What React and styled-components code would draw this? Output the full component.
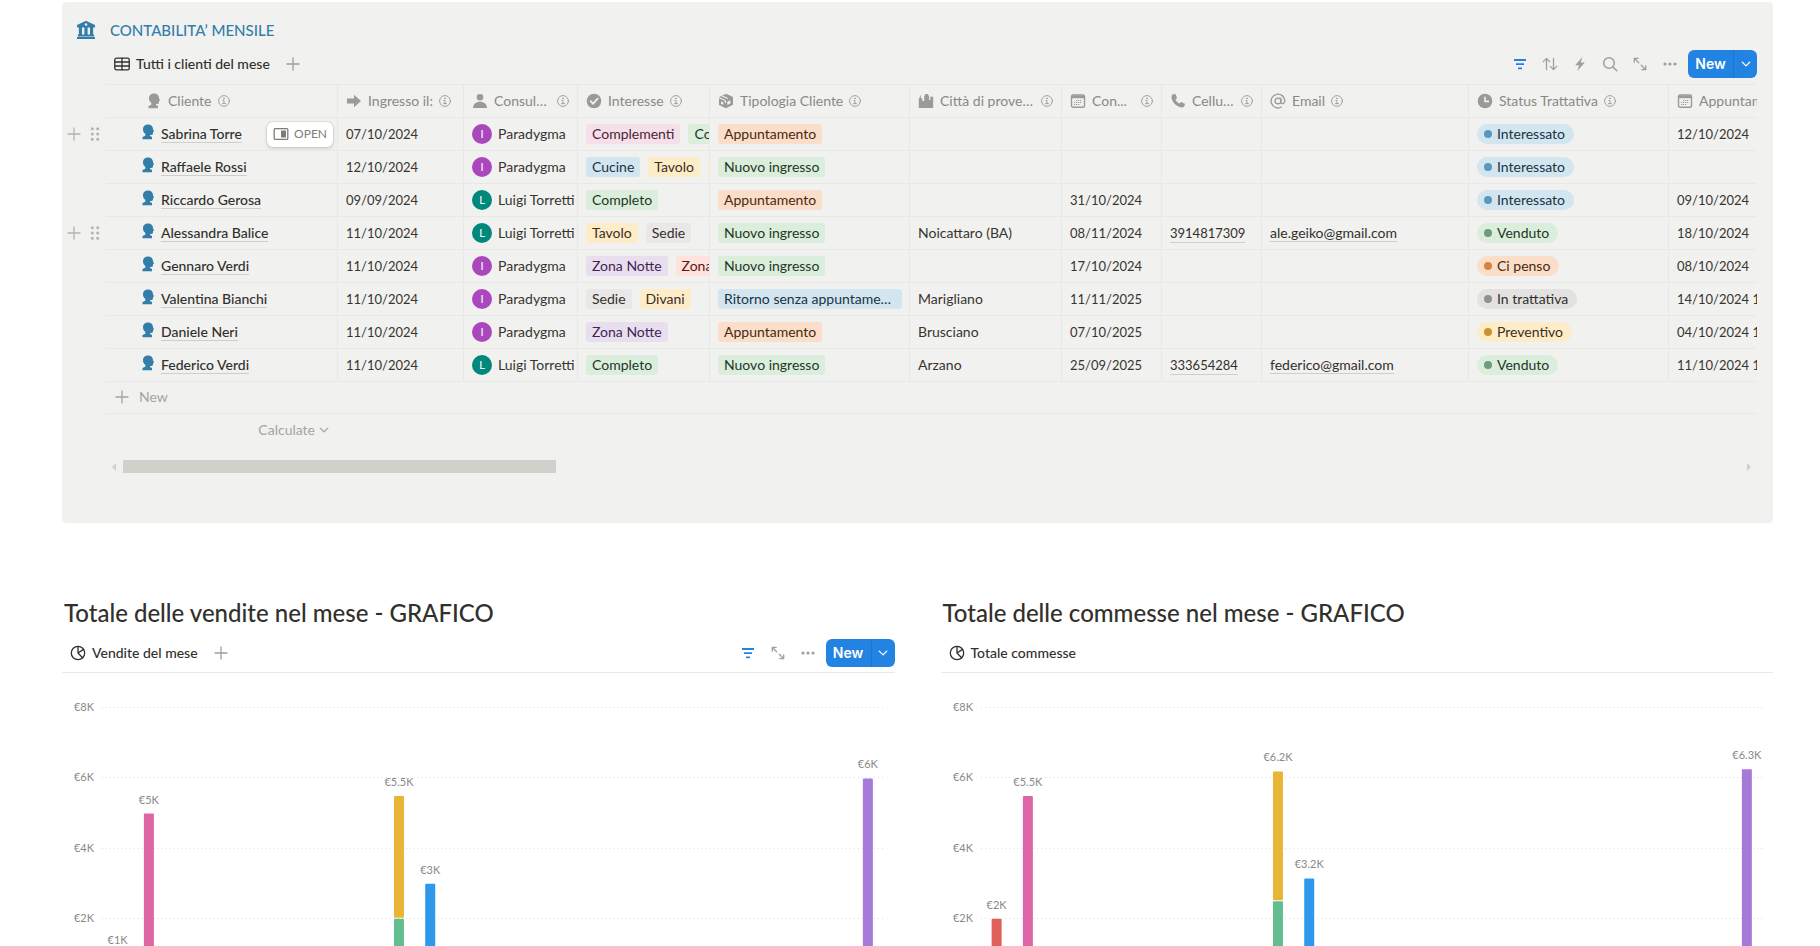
import React from 'react';
import styled, { createGlobalStyle } from 'styled-components';

const GlobalStyle = createGlobalStyle`
  * {
    box-sizing: border-box;
  }

  body {
    margin: 0;
    background: #fff;
    color: #37352f;
    font-family: Lato, "Open Sans", sans-serif;
    font-size: 14px;
    line-height: 20px;
  }

  button {
    font: inherit;
    border: 0;
    padding: 0;
    background: none;
    cursor: pointer;
  }

  svg {
    display: block;
    flex: none;
  }
`;

const Page = styled.main`
  height: 100vh;
  overflow: hidden;
  padding: 2px 47px 0 62px;
`;

const Panel = styled.section`
  padding-bottom: 50px;
  border-radius: 4px;
  background: #f1f1ef;
`;

const PanelTitle = styled.h2`
  display: flex;
  align-items: center;
  gap: 14px;
  margin: 0;
  padding: 18px 14px 0;
  color: #337ea9;
  font-size: 15px;
  font-weight: 500;
`;

const Toolbar = styled.div`
  display: flex;
  align-items: center;
  justify-content: space-between;
  height: 44px;
  padding: ${(props) => (props.$inset ? '4px 16px 0 52px' : '4px 0 0 8px')};
  border-bottom: ${(props) => (props.$inset ? '0' : '1px solid #e9e9e8')};
`;

const Group = styled.div`
  display: flex;
  align-items: center;
`;

const Tab = styled.button`
  display: flex;
  align-items: center;
  gap: 6px;
  color: #32302c;
  font-weight: 500;
`;

const IconButton = styled.button`
  display: flex;
  align-items: center;
  justify-content: center;
  width: 30px;
  height: 28px;
  color: ${(props) => (props.$active ? '#2383e2' : '#a09f9b')};
`;

const AddView = styled(IconButton)`
  margin-left: 8px;
`;

const NewButton = styled.div`
  display: flex;
  height: 28px;
  margin-left: 3px;
  border-radius: 6px;
  overflow: hidden;
  background: #2383e2;
  color: #fff;
`;

const NewMain = styled.button`
  width: 45px;
  color: #fff;
  font-family: Inter, sans-serif;
  font-weight: 600;
`;

const NewMore = styled.button`
  display: flex;
  align-items: center;
  justify-content: center;
  width: 24px;
  border-left: 1px solid #1f74c9;
  color: #fff;
`;

const TableWrap = styled.div`
  overflow: hidden;
  margin-right: 16px;
`;

const Grid = styled.table`
  table-layout: fixed;
  width: 1807px;
  border-collapse: separate;
  border-spacing: 0;
`;

const HeadCell = styled.th`
  height: 34px;
  padding: 0 8px;
  padding-left: ${(props) => (props.$first ? '40px' : '8px')};
  border: solid #e8e8e6;
  border-width: ${(props) => (props.$first ? '1px 0 1px' : '1px 0 1px 1px')};
  font-weight: 400;
  text-align: left;
`;

const HeadInner = styled.div`
  display: flex;
  align-items: center;
  gap: 6px;
  color: #9b9a97;
`;

const HeadLabel = styled.span`
  overflow: hidden;
  color: #8a8985;
  text-overflow: ellipsis;
  white-space: nowrap;
`;

const InfoSlot = styled.span`
  margin-left: ${(props) => (props.$push ? 'auto' : '0')};
`;

const Cell = styled.td`
  height: 33px;
  padding: 0 0 0 8px;
  border: solid #e8e8e6;
  border-width: 0 0 1px 1px;
  overflow: hidden;
  white-space: nowrap;
`;

const NameCell = styled(Cell)`
  padding: 0 4px 0 34px;
  border-left-width: 0;
`;

const HandleCell = styled.td`
  padding: 0 0 2px 4px;
`;

const Handles = styled.div`
  display: flex;
  align-items: center;
  gap: 5px;

  button {
    color: #b4b3af;
  }
`;

const Inline = styled.div`
  display: flex;
  align-items: center;
  gap: ${(props) => props.$gap}px;
`;

const NameIcon = styled.span`
  color: #337ea9;
  padding-bottom: 4px;
`;

const NameLink = styled.a`
  border-bottom: 1px solid #cfcecb;
  color: #32302c;
  font-weight: 500;
  line-height: 17px;
  text-decoration: none;
`;

const Contact = styled.a`
  display: inline-block;
  border-bottom: 1px solid #cfcecb;
  color: #32302c;
  font-size: ${(props) => (props.$digits ? '13px' : '14px')};
  line-height: 17px;
  text-decoration: none;
`;

const DateText = styled.span`
  font-size: 13px;
`;

const OpenButton = styled.button`
  display: flex;
  align-items: center;
  gap: 5px;
  height: 25px;
  margin-left: auto;
  padding: 0 6px;
  border-radius: 6px;
  background: #fff;
  box-shadow: 0 0 0 1px rgba(84, 72, 49, 0.1), 0 2px 4px rgba(0, 0, 0, 0.12);
  color: #7d7c78;
  font-size: 12px;
`;

const Avatar = styled.span`
  display: flex;
  align-items: center;
  justify-content: center;
  width: 20px;
  height: 20px;
  border-radius: 50%;
  background: ${(props) => props.$color};
  color: #fff;
  font-size: 11px;
`;

const Tag = styled.span`
  flex: none;
  max-width: 184px;
  padding: 0 6px;
  border-radius: 3px;
  overflow: hidden;
  background: ${(props) => props.$tone[0]};
  color: ${(props) => props.$tone[1]};
  text-overflow: ellipsis;
`;

const Status = styled.span`
  display: flex;
  align-items: center;
  gap: 5px;
  padding: 0 9px 0 7px;
  border-radius: 10px;
  background: ${(props) => props.$tone[0]};
  color: ${(props) => props.$tone[1]};

  &::before {
    content: "";
    width: 8px;
    height: 8px;
    border-radius: 50%;
    background: ${(props) => props.$tone[2]};
  }
`;

const TableFoot = styled.div`
  margin: 0 16px 0 44px;
`;

const NewRow = styled.button`
  display: flex;
  align-items: center;
  gap: 9px;
  width: 100%;
  height: 32px;
  padding: 0 0 2px 8px;
  border-bottom: 1px solid #e8e8e6;
  color: #a5a4a0;
`;

const Calculate = styled.button`
  display: flex;
  align-items: center;
  justify-content: flex-end;
  gap: 3px;
  width: 231px;
  height: 32px;
  padding-right: 7px;
  color: #a5a4a0;
`;

const ScrollBar = styled.div`
  display: flex;
  align-items: center;
  height: 13px;
  margin-top: 14px;
  padding: 0 6px;
  color: #d1d0cb;
`;

const Thumb = styled.div`
  width: 433px;
  height: 13px;
  margin: 0 auto 0 7px;
  background: #d1d0cb;
`;

const Columns = styled.div`
  display: grid;
  grid-template-columns: 1fr 1fr;
  gap: 46px;
  padding-top: 73px;
`;

const ChartTitle = styled.h2`
  margin: 0;
  padding: 1px 2px 0;
  color: #32302c;
  font-size: 24px;
  font-weight: 500;
  line-height: 32px;
`;

const Plot = styled.svg`
  width: calc(100% - 51px);
  height: 320px;
  margin: 24px 11px 0 40px;
  overflow: visible;

  text {
    fill: #8a8985;
    font-size: 11px;
  }
`;

const Svg = ({ size = 16, children, ...rest }) => (
  <svg width={size} height={size} viewBox="0 0 16 16" fill="currentColor" aria-hidden="true" {...rest}>
    {children}
  </svg>
);

const stroke = {
  fill: 'none', stroke: 'currentColor', strokeWidth: 1.3, strokeLinecap: 'round', strokeLinejoin: 'round',
};

const BankIcon = () => (
  <Svg size={20}>
    <path d="M8 .6 15.2 4v1.9H.8V4zM2.3 5.9h2.5v5.9H2.3zm4.4 0h2.6v5.9H6.7zm4.5 0h2.5v5.9h-2.5zM1.5 11.5h13v1.6h-13zM.8 13.5h14.4v1.7H.8z" />
    <circle cx="8" cy="3.5" r="1" fill="#f1f1ef" />
  </Svg>
);
const TableIcon = () => (
  <Svg {...stroke}>
    <rect x=".8" y="2.2" width="14.4" height="11.6" rx="1.6" />
    <path d="M.8 6h14.4M.8 10h14.4M8 2.2v11.6" />
  </Svg>
);
const PieIcon = () => (
  <Svg {...stroke}>
    <circle cx="8" cy="8" r="6.7" />
    <path d="M8 1.3V8l5.6-3.6M8 8l4.6 4.8" />
  </Svg>
);
const PlusIcon = () => (
  <Svg {...stroke}><path d="M8 2v12M2 8h12" /></Svg>
);
const FilterIcon = () => (
  <Svg fill="none" stroke="currentColor" strokeWidth="1.8"><path d="M2 4h12M4 8.2h8M6 12.4h4" /></Svg>
);
const SortIcon = () => (
  <Svg {...stroke}><path d="M4.5 13.5v-11M1.3 5.6l3.2-3.2 3.2 3.2M11.5 2.5v11M8.3 10.4l3.2 3.2 3.2-3.2" /></Svg>
);
const BoltIcon = () => (
  <Svg><path d="M10.4 1 3.2 9.2h3.9L5.3 15l7.5-8.4H8.7z" /></Svg>
);
const SearchIcon = () => (
  <Svg {...stroke} strokeWidth={1.5}>
    <circle cx="7" cy="7" r="5.3" />
    <path d="m11 11 3.8 3.8" />
  </Svg>
);
const ExpandIcon = () => (
  <Svg {...stroke}><path d="M2.3 6.2V2.3h3.9M2.5 2.5l4.2 4.2M13.7 9.8v3.9H9.8M13.5 13.5 9.3 9.3" /></Svg>
);
const DotsIcon = () => (
  <Svg>
    <circle cx="3" cy="8" r="1.6" />
    <circle cx="8" cy="8" r="1.6" />
    <circle cx="13" cy="8" r="1.6" />
  </Svg>
);
const ChevronIcon = () => (
  <Svg size={12} {...stroke} strokeWidth={1.8}><path d="m3 5.5 5 5 5-5" /></Svg>
);
const GripIcon = () => (
  <Svg>
    {[2.7, 8, 13.3].map((y) => (
      <React.Fragment key={y}>
        <circle cx="5.3" cy={y} r="1.5" />
        <circle cx="10.7" cy={y} r="1.5" />
      </React.Fragment>
    ))}
  </Svg>
);
const HeadIcon = () => (
  <Svg>
    <path d="M8 .6c3 0 5 1.9 5 4.6l1.1 2.4-1.1.5v1.2c0 1-.6 1.600-1.600 1.600H10v1l2 1.200v2.200H2.500v-2.200l2.800-1.300V9.700C3.800 8.600 3 7.200 3 5.400 3 2.600 5.100.6 8 .6z" />
  </Svg>
);
const ArrowIcon = () => (
  <Svg><path d="M1 5.600h7V1.700L15 8l-7 6.300v-3.900H1z" /></Svg>
);
const PersonIcon = () => (
  <Svg>
    <circle cx="8" cy="4.2" r="3.3" />
    <path d="M1 15c.1-4 3-6.300 7-6.300s6.900 2.300 7 6.300z" />
  </Svg>
);
const CheckIcon = () => (
  <Svg>
    <circle cx="8" cy="8" r="7.3" />
    <path d="m4.600 8.200 2.500 2.500 4.500-5" fill="none" stroke="#f1f1ef" strokeWidth="1.8" strokeLinecap="round" />
  </Svg>
);
const BoxIcon = () => (
  <Svg>
    <path d="M8 .8 15 4v7.700l-7 3.500-7-3.200V4z" />
    <path d="M.8 4.500 7.300 7.500V10M3.600 2.700l6.200 2.700" fill="none" stroke="#f1f1ef" strokeWidth="1.100" />
    <path d="m3 8.400 2.300 1v2.400L3 10.900z" fill="#f1f1ef" />
    <path d="m9.300 8.700 3-1.500v3.300l-3 1.600z" fill="#f1f1ef" />
  </Svg>
);
const CityIcon = () => (
  <Svg><path d="M.8 15V5.500l1-.7V2.400h1v2.400l1.500.9V8h1.900V2.600h1V1h2.900v1.600h1V7h1.200V3.700h2.900V15z" /></Svg>
);
const CalendarIcon = () => (
  <Svg>
    <rect x="1.5" y="2" width="13" height="12.3" rx="1.8" {...stroke} strokeWidth={1.4} />
    <path d="M1.500 2.500h13v2.700h-13z" />
    <path d="M6 7.500h6M4 9.500h8M4 11.500h6" stroke="currentColor" strokeDasharray="1.2 .8" />
  </Svg>
);
const PhoneIcon = () => (
  <Svg>
    <path d="M3.300 1.300 5.400 1 7.100 4.900 5.500 6.500c.7 1.700 2 3 3.800 3.900l1.700-1.500 3.900 1.900-.4 2.300c-.4 1-1.400 1.500-2.700 1.400C6.600 13.900 1.700 9.300 1.500 4.100c0-1.500.7-2.500 1.800-2.800z" />
  </Svg>
);
const AtIcon = () => (
  <Svg {...stroke}>
    <circle cx="8" cy="8" r="2.9" />
    <path d="M10.900 5.200v3.900c0 2.500 4 2 4-1.300A6.900 6.900 0 1 0 11.500 14" />
  </Svg>
);
const ClockIcon = () => (
  <Svg>
    <circle cx="8" cy="8" r="7.3" />
    <path d="M8 3.800v4.600h4" fill="none" stroke="#f1f1ef" strokeWidth="1.6" />
  </Svg>
);
const InfoIcon = () => (
  <Svg size={12} {...stroke} strokeWidth={1.2}>
    <circle cx="8" cy="8" r="7.2" />
    <path d="M6.500 7.300H8v4.200M6 11.500h4" />
    <circle cx="7.9" cy="4.5" r=".5" />
  </Svg>
);
const PeekIcon = () => (
  <Svg>
    <rect x="1.2" y="2.6" width="13.6" height="10.8" rx="1" {...stroke} />
    <path d="M8 4.500h5v7H8z" />
  </Svg>
);

const tones = {
  pink: ['#f5e0e9', '#4c2337'],
  green: ['#dbeddb', '#1c3829', '#6c9b7d'],
  blue: ['#d3e5ef', '#183347', '#5b97bd'],
  yellow: ['#fdecc8', '#402c1b', '#cb912f'],
  orange: ['#fadec9', '#49290e', '#d9813d'],
  purple: ['#e8deee', '#412454'],
  red: ['#ffe2dd', '#5d1715'],
  light: ['#e9e8e6', '#32302c'],
  gray: ['#e3e2e0', '#32302c', '#91918e'],
};

const tagTones = {
  Complementi: tones.pink,
  Completo: tones.green,
  Cucine: tones.blue,
  Tavolo: tones.yellow,
  Divani: tones.yellow,
  Sedie: tones.light,
  'Zona Notte': tones.purple,
  'Zona Giorno': tones.red,
  Appuntamento: tones.orange,
  'Nuovo ingresso': tones.green,
  'Ritorno senza appuntamento': tones.blue,
};

const statusTones = {
  Interessato: tones.blue,
  Venduto: tones.green,
  'Ci penso': tones.orange,
  'In trattativa': tones.gray,
  Preventivo: tones.yellow,
};

const columns = [
  { label: 'Cliente', icon: <HeadIcon />, width: 231 },
  { label: 'Ingresso il:', icon: <ArrowIcon />, width: 126 },
  { label: 'Consulente', icon: <PersonIcon />, width: 114, cut: true },
  { label: 'Interesse', icon: <CheckIcon />, width: 132 },
  { label: 'Tipologia Cliente', icon: <BoxIcon />, width: 200 },
  { label: 'Città di provenienza', icon: <CityIcon />, width: 152, cut: true },
  { label: 'Con...', icon: <CalendarIcon />, width: 100, cut: true },
  { label: 'Cellulare', icon: <PhoneIcon />, width: 100, cut: true },
  { label: 'Email', icon: <AtIcon />, width: 207 },
  { label: 'Status Trattativa', icon: <ClockIcon />, width: 200 },
  { label: 'Appuntamento', icon: <CalendarIcon />, width: 201 },
];

const rows = [
  {
    name: 'Sabrina Torre', open: true, handles: true, date: '07/10/2024', who: 'Paradygma', tags: ['Complementi', 'Completo'], type: 'Appuntamento', status: 'Interessato', meet: '12/10/2024',
  },
  {
    name: 'Raffaele Rossi', date: '12/10/2024', who: 'Paradygma', tags: ['Cucine', 'Tavolo', 'Divani'], type: 'Nuovo ingresso', status: 'Interessato',
  },
  {
    name: 'Riccardo Gerosa', date: '09/09/2024', who: 'Luigi Torretti', tags: ['Completo'], type: 'Appuntamento', due: '31/10/2024', status: 'Interessato', meet: '09/10/2024',
  },
  {
    name: 'Alessandra Balice', handles: true, date: '11/10/2024', who: 'Luigi Torretti', tags: ['Tavolo', 'Sedie'], type: 'Nuovo ingresso', city: 'Noicattaro (BA)', due: '08/11/2024', phone: '3914817309', email: 'ale.geiko@gmail.com', status: 'Venduto', meet: '18/10/2024',
  },
  {
    name: 'Gennaro Verdi', date: '11/10/2024', who: 'Paradygma', tags: ['Zona Notte', 'Zona Giorno'], type: 'Nuovo ingresso', due: '17/10/2024', status: 'Ci penso', meet: '08/10/2024',
  },
  {
    name: 'Valentina Bianchi', date: '11/10/2024', who: 'Paradygma', tags: ['Sedie', 'Divani'], type: 'Ritorno senza appuntamento', city: 'Marigliano', due: '11/11/2025', status: 'In trattativa', meet: '14/10/2024 10:00',
  },
  {
    name: 'Daniele Neri', date: '11/10/2024', who: 'Paradygma', tags: ['Zona Notte'], type: 'Appuntamento', city: 'Brusciano', due: '07/10/2025', status: 'Preventivo', meet: '04/10/2024 10:00',
  },
  {
    name: 'Federico Verdi', date: '11/10/2024', who: 'Luigi Torretti', tags: ['Completo'], type: 'Nuovo ingresso', city: 'Arzano', due: '25/09/2025', phone: '333654284', email: 'federico@gmail.com', status: 'Venduto', meet: '11/10/2024 10:00',
  },
];

const sales = [
  { day: 0, label: '€1K', parts: [[1000, '#e05f58']] },
  { day: 1, label: '€5K', parts: [[5000, '#de65a6']] },
  { day: 9, label: '€5.5K', parts: [[2000, '#63be8f'], [3500, '#e8b634']] },
  { day: 10, label: '€3K', parts: [[3000, '#2e99ec']] },
  { day: 24, label: '€6K', parts: [[6000, '#a67ad9']] },
];

const orders = [
  { day: 0, label: '€2K', parts: [[2000, '#e05f58']] },
  { day: 1, label: '€5.5K', parts: [[5500, '#de65a6']] },
  { day: 9, label: '€6.2K', parts: [[2500, '#63be8f'], [3700, '#e8b634']] },
  { day: 10, label: '€3.2K', parts: [[3150, '#2e99ec']] },
  { day: 24, label: '€6.3K', parts: [[6260, '#a67ad9']] },
];

const DAYS = 25;
const BASE = 291;
const scaleY = (value) => BASE - value * 0.0351;

const HeaderCell = ({ column, first }) => (
  <HeadCell $first={first}>
    <HeadInner>
      {column.icon}
      <HeadLabel>{column.label}</HeadLabel>
      <InfoSlot $push={column.cut}><InfoIcon /></InfoSlot>
    </HeadInner>
  </HeadCell>
);

const ClientRow = ({ row }) => (
  <tr>
    <HandleCell>
      {row.handles && (
        <Handles>
          <button type="button" aria-label="Add row"><PlusIcon /></button>
          <button type="button" aria-label="Drag row"><GripIcon /></button>
        </Handles>
      )}
    </HandleCell>
    <NameCell>
      <Inline $gap={5}>
        <NameIcon><HeadIcon /></NameIcon>
        <NameLink href="#">{row.name}</NameLink>
        {row.open && (
          <OpenButton type="button">
            <PeekIcon />
            OPEN
          </OpenButton>
        )}
      </Inline>
    </NameCell>
    <Cell><DateText>{row.date}</DateText></Cell>
    <Cell>
      <Inline $gap={6}>
        <Avatar $color={row.who === 'Paradygma' ? '#ab47bc' : '#00897b'}>
          {row.who === 'Paradygma' ? 'I' : 'L'}
        </Avatar>
        {row.who}
      </Inline>
    </Cell>
    <Cell>
      <Inline $gap={8}>
        {row.tags.map((tag) => <Tag key={tag} $tone={tagTones[tag]}>{tag}</Tag>)}
      </Inline>
    </Cell>
    <Cell>
      <Inline $gap={8}><Tag $tone={tagTones[row.type]}>{row.type}</Tag></Inline>
    </Cell>
    <Cell>{row.city}</Cell>
    <Cell><DateText>{row.due}</DateText></Cell>
    <Cell>{row.phone && <Contact $digits href={`tel:${row.phone}`}>{row.phone}</Contact>}</Cell>
    <Cell>{row.email && <Contact href={`mailto:${row.email}`}>{row.email}</Contact>}</Cell>
    <Cell>
      <Inline $gap={8}><Status $tone={statusTones[row.status]}>{row.status}</Status></Inline>
    </Cell>
    <Cell><DateText>{row.meet}</DateText></Cell>
  </tr>
);

const ViewActions = ({ full }) => (
  <Group>
    <IconButton type="button" $active aria-label="Filter"><FilterIcon /></IconButton>
    {full && (
      <>
        <IconButton type="button" aria-label="Sort"><SortIcon /></IconButton>
        <IconButton type="button" aria-label="Automations"><BoltIcon /></IconButton>
        <IconButton type="button" aria-label="Search"><SearchIcon /></IconButton>
      </>
    )}
    <IconButton type="button" aria-label="Expand"><ExpandIcon /></IconButton>
    <IconButton type="button" aria-label="More"><DotsIcon /></IconButton>
    <NewButton>
      <NewMain type="button">New</NewMain>
      <NewMore type="button" aria-label="Templates"><ChevronIcon /></NewMore>
    </NewButton>
  </Group>
);

const Bar = ({ bar }) => {
  let total = 0;
  const segments = bar.parts.map(([value, color]) => {
    const bottom = scaleY(total);
    total += value;
    return { color, y: scaleY(total) + 1, height: bottom - scaleY(total) - 1 };
  });
  const x = `${((bar.day + 0.5) / DAYS) * 100}%`;
  return (
    <>
      {segments.map((segment) => (
        <rect
          key={segment.color}
          x={x}
          y={segment.y}
          width="10"
          height={segment.height}
          rx="1"
          fill={segment.color}
          transform="translate(-5 0)"
        />
      ))}
      <text x={x} y={scaleY(total) - 9} textAnchor="middle">{bar.label}</text>
    </>
  );
};

const ChartBlock = ({ title, view, bars, editable }) => (
  <section>
    <ChartTitle>{title}</ChartTitle>
    <Toolbar>
      <Group>
        <Tab type="button">
          <PieIcon />
          {view}
        </Tab>
        {editable && <AddView type="button" aria-label="Add view"><PlusIcon /></AddView>}
      </Group>
      {editable && <ViewActions />}
    </Toolbar>
    <Plot role="img" aria-label={title}>
      {[8, 6, 4, 2].map((value) => (
        <React.Fragment key={value}>
          <text x="-8" y={scaleY(value * 1000) + 4} textAnchor="end">{`€${value}K`}</text>
          <line
            x1="0"
            x2="100%"
            y1={Math.round(scaleY(value * 1000)) + 0.5}
            y2={Math.round(scaleY(value * 1000)) + 0.5}
            stroke="#dededc"
            strokeDasharray="1 3"
          />
        </React.Fragment>
      ))}
      {bars.map((bar) => <Bar key={bar.day} bar={bar} />)}
    </Plot>
  </section>
);

const App = () => (
  <Page>
    <GlobalStyle />
    <Panel>
      <PanelTitle>
        <BankIcon />
        CONTABILITA’ MENSILE
      </PanelTitle>
      <Toolbar $inset>
        <Group>
          <Tab type="button">
            <TableIcon />
            Tutti i clienti del mese
          </Tab>
          <AddView type="button" aria-label="Add view"><PlusIcon /></AddView>
        </Group>
        <ViewActions full />
      </Toolbar>
      <TableWrap>
        <Grid>
          <colgroup>
            <col width="44" />
            {columns.map((column) => <col key={column.label} width={column.width} />)}
          </colgroup>
          <thead>
            <tr>
              <td />
              {columns.map((column, index) => (
                <HeaderCell key={column.label} column={column} first={index === 0} />
              ))}
            </tr>
          </thead>
          <tbody>
            {rows.map((row) => <ClientRow key={row.name} row={row} />)}
          </tbody>
        </Grid>
      </TableWrap>
      <TableFoot>
        <NewRow type="button">
          <PlusIcon />
          New
        </NewRow>
        <Calculate type="button">
          Calculate
          <ChevronIcon />
        </Calculate>
        <ScrollBar>
          <svg width="4" height="8" fill="currentColor"><path d="M4 0v8L0 4z" /></svg>
          <Thumb />
          <svg width="4" height="8" fill="currentColor"><path d="M0 0v8l4-4z" /></svg>
        </ScrollBar>
      </TableFoot>
    </Panel>
    <Columns>
      <ChartBlock
        title="Totale delle vendite nel mese - GRAFICO"
        view="Vendite del mese"
        bars={sales}
        editable
      />
      <ChartBlock
        title="Totale delle commesse nel mese - GRAFICO"
        view="Totale commesse"
        bars={orders}
      />
    </Columns>
  </Page>
);

export default App;
